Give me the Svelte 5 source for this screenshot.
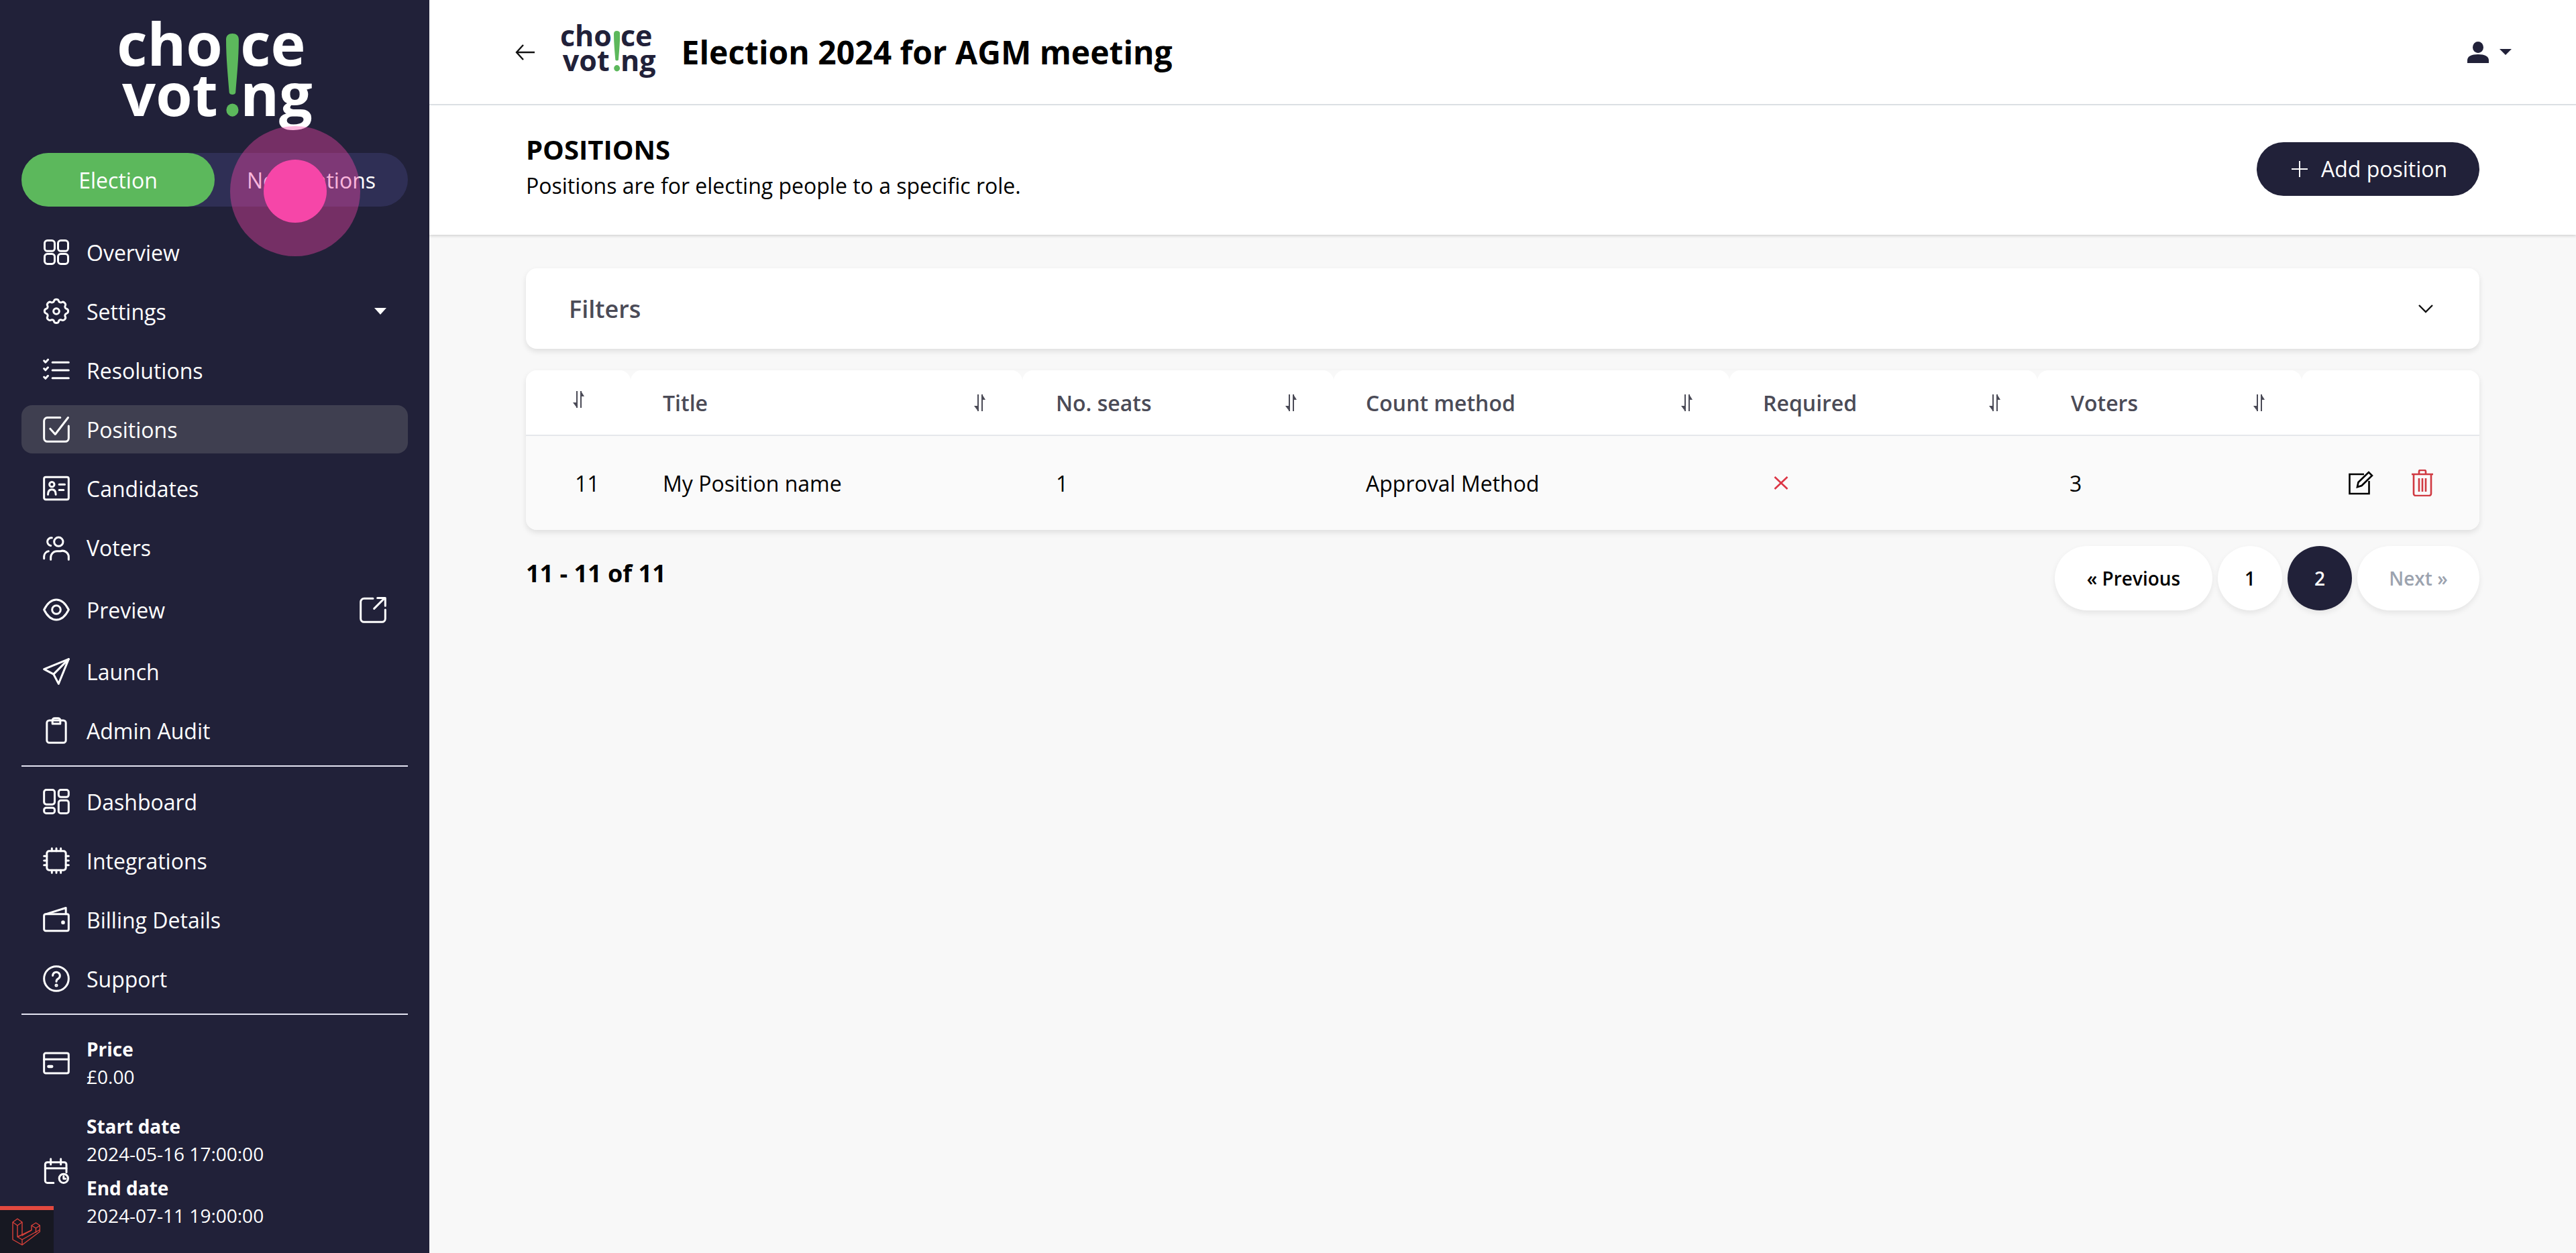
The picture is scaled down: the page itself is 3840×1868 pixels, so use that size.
<script>
const upper = [
    { label: "Overview", icon: '<rect x="1.5" y="1.5" width="9" height="9.5" rx="2.5"/><rect x="13.5" y="1.5" width="9" height="9.5" rx="2.5"/><rect x="1.5" y="13.5" width="9" height="9" rx="2.5"/><rect x="13.5" y="13.5" width="9" height="9" rx="2.5"/>' },
    { label: "Settings", caret: true, icon: '<path d="M10 2.6c.5-1.7 3.5-1.7 4 0a2 2 0 0 0 3 1.3c1.6-.9 3.9 1.4 3 3a2 2 0 0 0 1.3 3c1.7.5 1.7 3.5 0 4a2 2 0 0 0-1.3 3c.9 1.6-1.4 3.9-3 3a2 2 0 0 0-3 1.3c-.5 1.7-3.5 1.7-4 0a2 2 0 0 0-3-1.3c-1.6.9-3.9-1.4-3-3a2 2 0 0 0-1.3-3c-1.7-.5-1.7-3.5 0-4a2 2 0 0 0 1.3-3c-.9-1.6 1.4-3.9 3-3a2 2 0 0 0 3-1.3z"/><circle cx="12" cy="12" r="2.6"/>' },
    { label: "Resolutions", icon: '<path d="M8.5 5h14.5M8.5 12h14.5M8.5 19h14.5"/><path d="M1 3.5l1.3 1.4L4.5 2.5M1 10.5l1.3 1.4 2.2-2.4M1 18l1.3 1.4L4.5 17"/>' },
    { label: "Positions", active: true, icon: '<path d="M15.5 1.5H4a3 3 0 0 0-3 3V20a3 3 0 0 0 3 3h16a3 3 0 0 0 3-3V9"/><path d="M6.5 11.5l4.5 5L22.5 1.5"/>' },
    { label: "Candidates", icon: '<rect x="1" y="2" width="22" height="20" rx="1.5"/><circle cx="8" cy="8.5" r="2.2"/><path d="M4.5 17.5c0-3 1.5-4.5 3.5-4.5s3.5 1.5 3.5 4.5M14.5 8.5h5M14.5 13.5h4"/>' },
    { label: "Voters", icon: '<circle cx="14" cy="7" r="4"/><path d="M7 23v-2a5.5 5.5 0 0 1 5.5-5.5h3A5.5 5.5 0 0 1 23 21v2"/><path d="M8 3.5a3.5 3.5 0 0 0-1 7M1 22v-2a5 5 0 0 1 4-4.5"/>' },
    { label: "Preview", external: true, icon: '<path d="M1 12C4 6 8 3 12 3s8 3 11 9c-3 6-7 9-11 9s-8-3-11-9z"/><circle cx="12" cy="12" r="3.8"/>' },
    { label: "Launch", icon: '<path d="M23 1L1 10l8.5 4.5L14 23z"/><path d="M23 1L9.5 14.5"/>' },
    { label: "Admin Audit", icon: '<rect x="3.5" y="3" width="17" height="20" rx="2.2"/><path d="M8.5 6V3a2 2 0 0 1 2-2h3a2 2 0 0 1 2 2v3z"/>' }
]
const lower = [
    { label: "Dashboard", icon: '<rect x="1" y="1.5" width="9.5" height="13" rx="2"/><rect x="14" y="1.5" width="9" height="6.5" rx="2"/><rect x="1" y="17.5" width="9.5" height="5" rx="2"/><rect x="14" y="11" width="9" height="11.5" rx="2"/>' },
    { label: "Integrations", icon: '<rect x="3.5" y="3.5" width="17" height="17" rx="2"/><path d="M8 1v2.5M12 1v2.5M16 1v2.5M8 20.5V23M12 20.5V23M16 20.5V23M1 8h2.5M1 12h2.5M1 16h2.5M20.5 8H23M20.5 12H23M20.5 16H23"/>' },
    { label: "Billing Details", icon: '<path d="M3 7L20.5 1.5V7"/><rect x="1" y="7" width="22" height="15" rx="1.5"/><circle cx="18" cy="14.5" r=".8"/>' },
    { label: "Support", icon: '<circle cx="12" cy="12" r="11"/><path d="M8.8 9.3a3.2 3.2 0 1 1 4.8 2.8c-1 .6-1.6 1.2-1.6 2.4"/><circle cx="12" cy="18" r=".6"/>' }
]
const columns = ["", "Title", "No. seats", "Count method", "Required", "Voters", ""]
</script>

<div class="page">
    <aside class="sidebar">
        <div class="brand">
            <div class="logo big">
                <span class="line">cho<span class="gap">i</span>ce</span>
                <span class="line second">vot<span class="gap">i</span>ng</span>
                <svg class="bang" viewBox="0 0 20 124" preserveAspectRatio="none"><path d="M10 0c6 0 10 3 10 9 0 28-3 55-5 79-.3 4-9.7 4-10 0C3 64 0 37 0 9 0 3 4 0 10 0z"/><ellipse cx="10" cy="114" rx="9.6" ry="9.6"/></svg>
            </div>
        </div>

        <div class="switch">
            <span class="on">Election</span>
            <span>Nominations</span>
        </div>

        <nav>
            {#each upper as item}
            <div class="item" class:active={item.active} class:tall={item.external}>
                <svg class="ico" viewBox="0 0 24 24">{@html item.icon}</svg>
                <span>{item.label}</span>
                {#if item.caret}<i class="caret"></i>{/if}
                {#if item.external}
                <svg class="ico ext" viewBox="0 0 24 24"><path d="M12 2H4a3 3 0 0 0-3 3v15a3 3 0 0 0 3 3h16a3 3 0 0 0 3-3V12"/><path d="M13 11L22.5 1.5M16 1.5h7v7"/></svg>
                {/if}
            </div>
            {/each}
            <hr />
            {#each lower as item}
            <div class="item">
                <svg class="ico" viewBox="0 0 24 24">{@html item.icon}</svg>
                <span>{item.label}</span>
            </div>
            {/each}
            <hr />
        </nav>

        <div class="info price">
            <svg class="ico" viewBox="0 0 24 24"><rect x="1" y="3" width="22" height="18" rx="1.5"/><path d="M1 8.5h22"/><path d="M5 15h3" stroke-width="2.6"/></svg>
            <div>
                <b>Price</b>
                <span>£0.00</span>
            </div>
        </div>
        <div class="info">
            <svg class="ico" viewBox="0 0 24 24"><path d="M9.5 22.5H4a2 2 0 0 1-2-2V6a2 2 0 0 1 2-2h15a2 2 0 0 1 2 2v7"/><path d="M2 9.5h19M7 1v5M16 1v5"/><circle cx="18.5" cy="18.5" r="4"/><path d="M18.5 16.5v2.2h1.8"/></svg>
            <div>
                <b>Start date</b>
                <span>2024-05-16 17:00:00</span>
                <b class="next">End date</b>
                <span>2024-07-11 19:00:00</span>
            </div>
        </div>

        <div class="debugbar">
            <svg viewBox="0 0 42 42"><path d="M1 7l7-5 7 5v20l14-8v-7l6.5-4 6 4v9L15 41 1 33z"/><path d="M1 7l7 5 7-5M8 12v17l7 4 27-15M29 12l6.5 4 6-4M35.5 16v7M15 33v8M8 29l21-10"/></svg>
        </div>
    </aside>

    <div class="touch"><div class="dot"></div></div>

    <main>
        <header class="topbar">
            <svg class="back" viewBox="0 0 28 24"><path d="M28 12H1M11 1L1 12l10 11"/></svg>
            <div class="logo small">
                <span class="line">cho<span class="gap">i</span>ce</span>
                <span class="line second">vot<span class="gap">i</span>ng</span>
                <svg class="bang" viewBox="0 0 20 124" preserveAspectRatio="none"><path d="M10 0c6 0 10 3 10 9 0 28-3 55-5 79-.3 4-9.7 4-10 0C3 64 0 37 0 9 0 3 4 0 10 0z"/><ellipse cx="10" cy="114" rx="9.6" ry="9.6"/></svg>
            </div>
            <h1>Election 2024 for AGM meeting</h1>
            <div class="user">
                <svg viewBox="0 0 32 32"><ellipse cx="16" cy="8.5" rx="8" ry="8.5"/><path d="M0 32v-4c0-6 6-9 16-9s16 3 16 9v4z"/></svg>
                <i></i>
            </div>
        </header>

        <section class="subbar">
            <div class="heading">
                <h2>POSITIONS</h2>
                <p>Positions are for electing people to a specific role.</p>
            </div>
            <button class="add"><svg viewBox="0 0 24 24"><path d="M12 0v24M0 12h24"/></svg>Add position</button>
        </section>

        <div class="content">
            <div class="filters">
                <span>Filters</span>
                <svg viewBox="0 0 24 14"><path d="M2 2l10 10L22 2"/></svg>
            </div>

            <table>
                <thead>
                    <tr>
                        {#each columns as col, i}
                        <th>
                            <div class="th" class:first={i == 0}>
                                <span>{col}</span>
                                {#if i < 6}
                                <svg class="sort" viewBox="0 0 20 27"><path d="M8 1v25M14 1v25"/><path class="head" d="M2 18h6v8zM14 1v8h5z"/></svg>
                                {/if}
                            </div>
                        </th>
                        {/each}
                    </tr>
                </thead>
                <tbody>
                    <tr>
                        <td class="id">11</td>
                        <td>My Position name</td>
                        <td>1</td>
                        <td>Approval Method</td>
                        <td><svg class="cross" viewBox="0 0 22 20"><path d="M1.5 1l19 18M20.5 1l-19 18"/></svg></td>
                        <td>3</td>
                        <td>
                            <div class="actions">
                                <svg class="edit" viewBox="0 0 38 36"><path d="M24 5H2.5v29h29V15"/><path d="M14 24l1.5-7L31 2l5 5-15.5 15z"/></svg>
                                <svg class="trash" viewBox="0 0 34 40"><path d="M1 7h32M12 7V3a2 2 0 0 1 2-2h6a2 2 0 0 1 2 2v4M4 7v29a3 3 0 0 0 3 3h20a3 3 0 0 0 3-3V7M12 13v20M17 13v20M22 13v20"/></svg>
                            </div>
                        </td>
                    </tr>
                </tbody>
            </table>

            <div class="footer">
                <div class="count">11 - 11 of 11</div>
                <div class="pager">
                    <span class="wide">« Previous</span>
                    <span class="num">1</span>
                    <span class="num current">2</span>
                    <span class="wide off">Next »</span>
                </div>
            </div>
        </div>
    </main>
</div>

<style>
:global(body) {
    margin: 0;
    font-family: "Open Sans", sans-serif;
}
.page {
    display: flex;
    position: relative;
    width: 3840px;
    height: 1868px;
    overflow: hidden;
    background: #f8f8f8;
}

/* sidebar */
.sidebar {
    position: relative;
    width: 640px;
    flex: none;
    box-sizing: border-box;
    padding: 0 32px;
    background: #212139;
    color: #fff;
    font-size: 32px;
}
.brand {
    height: 228px;
    display: flex;
    justify-content: center;
    padding-top: 27px;
    box-sizing: border-box;
}
.logo {
    position: relative;
    display: block;
    font-weight: 700;
    white-space: nowrap;
    line-height: .85em;
    width: max-content;
}
.logo.big {
    font-size: 88px;
    color: #fff;
}
.logo.small {
    font-size: 43px;
    color: #212139;
    margin-bottom: 11px;
}
.line {
    display: block;
}
.second {
    padding-left: .09em;
}
.gap {
    color: transparent;
    display: inline-block;
    width: .3em;
}
.second .gap {
    width: .38em;
}
.bang {
    position: absolute;
    left: 1.85em;
    top: .256em;
    width: .215em;
    height: 1.41em;
}
.bang path,
.bang ellipse {
    fill: #5cb85c;
}
.switch {
    display: flex;
    height: 80px;
    border-radius: 40px;
    background: #2f2f55;
    margin-bottom: 32px;
}
.switch span {
    flex: 1;
    display: flex;
    align-items: center;
    justify-content: center;
    border-radius: 40px;
}
.switch .on {
    background: #5cb85c;
}
.item {
    display: flex;
    align-items: center;
    gap: 25px;
    height: 72px;
    margin-bottom: 16px;
    padding: 0 32px;
    border-radius: 16px;
}
.item.tall {
    height: 82px;
    margin-bottom: 15px;
}
.item.active {
    background: #3f3f50;
}
.ico {
    width: 40px;
    height: 40px;
    flex: none;
    fill: none;
    stroke: #fff;
    stroke-width: 1.8;
    stroke-linecap: round;
    stroke-linejoin: round;
}
.ext {
    margin-left: auto;
}
.caret {
    margin-left: auto;
    border-left: 9px solid transparent;
    border-right: 9px solid transparent;
    border-top: 10px solid #fff;
}
nav hr {
    border: 0;
    height: 2px;
    margin: 0 0 16px;
    background: #e4e4f2;
}
.info {
    display: flex;
    align-items: center;
    gap: 25px;
    padding-left: 32px;
    font-size: 28px;
    line-height: 41px;
}
.info div {
    display: flex;
    flex-direction: column;
}
.info b {
    font-weight: 700;
}
.info .next {
    margin-top: 10px;
}
.info.price {
    margin-top: 31px;
    margin-bottom: 33px;
}
.debugbar {
    position: absolute;
    left: 0;
    bottom: 0;
    width: 80px;
    height: 70px;
    box-sizing: border-box;
    border-top: 6px solid #e3493f;
    background: #171822;
}
.debugbar svg {
    position: absolute;
    left: 18px;
    top: 11px;
    width: 42px;
    height: 42px;
    fill: none;
    stroke: #d9413a;
    stroke-width: 1.4;
    stroke-linejoin: round;
}

/* click marker */
.touch {
    position: absolute;
    left: 343px;
    top: 188px;
    width: 194px;
    height: 194px;
    border-radius: 50%;
    background: rgba(246, 70, 168, .4);
    display: flex;
    align-items: center;
    justify-content: center;
    z-index: 5;
}
.dot {
    width: 94px;
    height: 94px;
    border-radius: 50%;
    background: #f646a8;
}

/* main */
main {
    flex: 1;
    min-width: 0;
}
.topbar {
    height: 155px;
    display: flex;
    align-items: center;
    padding: 0 96px 0 128px;
    background: #fff;
    border-bottom: 2px solid #dee2e6;
}
.back {
    width: 30px;
    height: 24px;
    fill: none;
    stroke: #111;
    stroke-width: 2.4;
    margin-right: 37px;
}
h1 {
    margin: 0 0 0 38px;
    font-size: 48px;
    font-weight: 700;
    color: #000;
}
.user {
    margin-left: auto;
    display: flex;
    align-items: center;
    gap: 16px;
}
.user svg {
    width: 32px;
    height: 32px;
    fill: #212139;
}
.user i {
    border-left: 9px solid transparent;
    border-right: 9px solid transparent;
    border-top: 9px solid #212139;
}
.subbar {
    height: 193px;
    box-sizing: border-box;
    display: flex;
    align-items: center;
    justify-content: space-between;
    padding: 0 144px 4px;
    background: #fff;
    box-shadow: 0 2px 4px rgba(0, 0, 0, .15);
    position: relative;
}
.heading {
    margin-bottom: 6px;
}
h2 {
    margin: 0 0 7px;
    font-size: 40px;
    line-height: 50px;
    font-weight: 700;
    color: #000;
}
.subbar p {
    margin: 0;
    font-size: 32px;
    line-height: 44px;
    color: #000;
}
.add {
    display: flex;
    align-items: center;
    gap: 20px;
    height: 80px;
    width: 332px;
    box-sizing: border-box;
    padding: 0 0 0 52px;
    border: 0;
    border-radius: 40px;
    background: #212139;
    color: #fff;
    font: 32px "Open Sans", sans-serif;
}
.add svg {
    width: 24px;
    height: 24px;
    stroke: #fff;
    stroke-width: 2;
}
.content {
    padding: 50px 144px 0;
}
.filters {
    height: 120px;
    display: flex;
    align-items: center;
    justify-content: space-between;
    padding: 0 68px 0 64px;
    background: #fff;
    border-radius: 16px;
    box-shadow: 0 4px 8px rgba(0, 0, 0, .1);
    color: #4b4b57;
    font-size: 36px;
    font-weight: 600;
    margin-bottom: 32px;
}
.filters svg {
    width: 24px;
    height: 14px;
    fill: none;
    stroke: #111;
    stroke-width: 2.4;
}

/* table */
table {
    width: 100%;
    table-layout: fixed;
    border-collapse: separate;
    border-spacing: 0;
    border-radius: 16px;
    box-shadow: 0 4px 8px rgba(0, 0, 0, .1);
}
th:nth-child(1) { width: 156px; }
th:nth-child(2) { width: 584px; }
th:nth-child(3) { width: 464px; }
th:nth-child(4) { width: 590px; }
th:nth-child(5) { width: 459px; }
th:nth-child(6) { width: 394px; }
th {
    height: 96px;
    padding: 0;
    background: #fff;
    border-radius: 16px 16px 0 0;
    border-bottom: 2px solid #e5e7eb;
    color: #4b4b57;
    font-size: 32px;
    font-weight: 600;
    text-align: left;
}
.th {
    display: flex;
    align-items: center;
    justify-content: space-between;
    padding: 0 54px 0 48px;
}
th:nth-child(3) .th,
th:nth-child(5) .th,
th:nth-child(6) .th {
    padding-left: 50px;
}
.th.first {
    justify-content: center;
    padding: 0 0 10px;
}
.sort {
    width: 20px;
    height: 27px;
    stroke: #4b4b57;
    stroke-width: 2;
    fill: none;
}
.head {
    fill: #4b4b57;
    stroke: none;
}
td {
    height: 140px;
    padding: 0 0 0 48px;
    background: #fafafa;
    font-size: 32px;
    color: #000;
}
td:nth-child(3) {
    padding-left: 50px;
}
td:first-child {
    border-radius: 0 0 0 16px;
}
td:last-child {
    border-radius: 0 0 16px 0;
}
.id {
    padding-left: 73px;
}
.cross {
    display: block;
    width: 22px;
    height: 20px;
    margin-left: 18px;
    fill: none;
    stroke: #dc3545;
    stroke-width: 2.6;
}
.actions {
    display: flex;
    align-items: center;
    gap: 56px;
    padding-left: 21px;
}
.edit {
    width: 38px;
    height: 36px;
    fill: none;
    stroke: #000;
    stroke-width: 2.6;
}
.trash {
    width: 34px;
    height: 40px;
    fill: none;
    stroke: #d03a42;
    stroke-width: 2.6;
}

/* pagination */
.footer {
    display: flex;
    justify-content: space-between;
    align-items: flex-start;
    margin-top: 24px;
}
.count {
    font-size: 36px;
    font-weight: 700;
    line-height: 48px;
    color: #000;
    margin-top: 17px;
}
.pager {
    display: flex;
    gap: 8px;
}
.pager span {
    height: 96px;
    display: flex;
    align-items: center;
    justify-content: center;
    border-radius: 48px;
    background: #fff;
    box-shadow: 0 4px 8px rgba(0, 0, 0, .08);
    font-size: 28px;
    font-weight: 600;
    color: #000;
}
.pager .wide {
    width: 235px;
}
.pager .off {
    width: 182px;
    color: #9ca3af;
}
.pager .num {
    width: 96px;
}
.pager .current {
    background: #212139;
    color: #fff;
}
</style>
